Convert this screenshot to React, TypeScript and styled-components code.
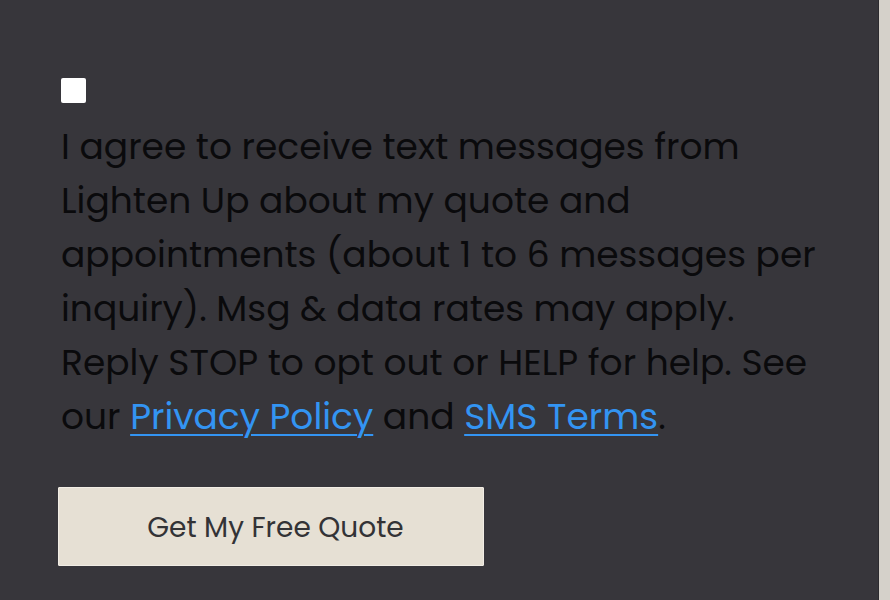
import React from 'react';
import styled, { createGlobalStyle } from 'styled-components';

const GlobalStyle = createGlobalStyle`
  html, body {
    margin: 0;
    padding: 0;
    height: 100%;
    background: #d5d1ca;
  }
  #root {
    height: 100%;
  }
`;

const Page = styled.div`
  display: flex;
  height: 600px;
  overflow: hidden;
`;

const Panel = styled.section`
  width: 879px;
  flex-shrink: 0;
  background: #37363b;
  border-right: 1px solid #2c2b2f;
  box-sizing: border-box;
  padding: 78px 40px 0 61px;
  font-family: 'Poppins', 'Open Sans', sans-serif;
`;

const ConsentLabel = styled.label`
  display: flex;
  flex-direction: column;
  gap: 17px;
`;

const Box = styled.input`
  appearance: none;
  margin: 0;
  width: 25px;
  height: 25px;
  border-radius: 2px;
  background: #ffffff;
  border: none;
`;

const ConsentText = styled.p`
  margin: 0;
  max-width: 770px;
  font-size: 36px;
  line-height: 54px;
  color: #0a0a0c;
`;

const Link = styled.a`
  color: #3394f2;
  text-decoration: underline;
  text-underline-offset: 5px;
  text-decoration-thickness: 2px;
`;

const SubmitButton = styled.button`
  margin: 43px 0 0 -3px;
  width: 426px;
  height: 79px;
  padding: 3px 0 0 9px;
  background: #e6e0d4;
  border: 1px solid #f1ede5;
  border-radius: 1px;
  font-family: 'Poppins', 'Open Sans', sans-serif;
  font-size: 28px;
  color: #333336;
  cursor: pointer;
`;

export default function App() {
  return (
    <>
      <GlobalStyle />
      <Page>
        <Panel>
          <ConsentLabel>
            <Box type="checkbox" />
            <ConsentText>
              I agree to receive text messages from Lighten Up about my quote and appointments (about 1 to 6
              messages per inquiry). Msg &amp; data rates may apply. Reply STOP to opt out or HELP for help. See
              our <Link href="#">Privacy Policy</Link> and <Link href="#">SMS Terms</Link>.
            </ConsentText>
          </ConsentLabel>
          <SubmitButton type="button">Get My Free Quote</SubmitButton>
        </Panel>
      </Page>
    </>
  );
}
